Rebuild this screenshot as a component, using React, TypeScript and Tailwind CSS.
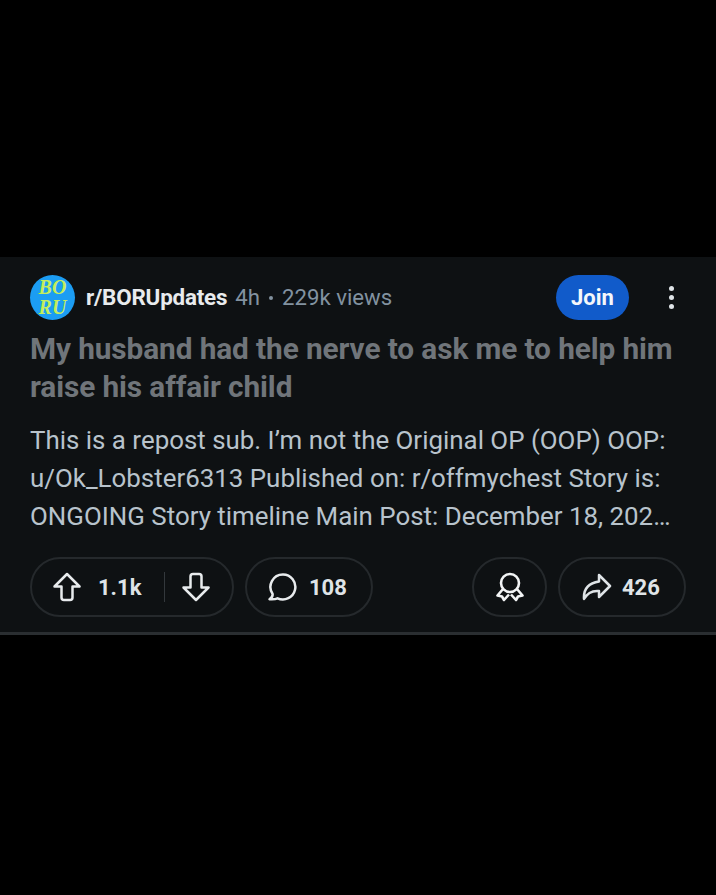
function UpvoteIcon() {
  return (
    <svg viewBox="0 0 28 30" className="h-[30px] w-[28px]" fill="none" stroke="#e8ebed" strokeWidth="2.5" strokeLinejoin="round" aria-hidden="true">
      <path d="M14 2 L26.5 14.5 L19.5 14.5 L19.5 25.5 Q19.5 28 17 28 L11 28 Q8.5 28 8.5 25.5 L8.5 14.5 L1.5 14.5 Z" />
    </svg>
  );
}

function DownvoteIcon() {
  return (
    <svg viewBox="0 0 28 30" className="h-[30px] w-[28px]" fill="none" stroke="#e8ebed" strokeWidth="2.5" strokeLinejoin="round" aria-hidden="true">
      <path d="M14 28 L26.5 15.5 L19.5 15.5 L19.5 4.5 Q19.5 2 17 2 L11 2 Q8.5 2 8.5 4.5 L8.5 15.5 L1.5 15.5 Z" />
    </svg>
  );
}

function CommentIcon() {
  return (
    <svg viewBox="0 0 30 28" className="h-[28px] w-[30px]" fill="none" stroke="#e8ebed" strokeWidth="2.5" strokeLinejoin="round" aria-hidden="true">
      <path d="M16 1.5 A12.5 12.5 0 1 1 10.5 25.3 Q8 26.6 2.5 26.2 Q6 24 5.6 21 A12.5 12.5 0 0 1 16 1.5 Z" />
    </svg>
  );
}

function AwardIcon() {
  return (
    <svg viewBox="0 0 28 30" className="h-[30px] w-[28px]" fill="none" stroke="#f2f4f5" strokeWidth="2.6" strokeLinejoin="round" aria-hidden="true">
      <circle cx="14" cy="11" r="9" />
      <path d="M7 17 L1.5 23.5 L6 24.5 L8 28 L13 22.5" />
      <path d="M21 17 L26.5 23.5 L22 24.5 L20 28 L15 22.5" />
    </svg>
  );
}

function ShareIcon() {
  return (
    <svg viewBox="0 0 30 28" className="h-[28px] w-[30px]" fill="none" stroke="#dfe4e7" strokeWidth="2.5" strokeLinejoin="round" aria-hidden="true">
      <path d="M17 2 L28 13 L17 24 L17 18 Q7 17 2 26 Q1 11 17 8.5 Z" />
    </svg>
  );
}

export default function App() {
  return (
    <div className="flex h-[895px] w-[716px] flex-col overflow-hidden bg-black pt-[257px] font-['Roboto',sans-serif]">
      <article className="h-[378px] border-b-[3px] border-[#2a2e31] bg-[#0e1113] pl-[30px] pr-[30px] pt-[17px]">
        <header className="flex h-[46px] items-center">
          <div className="flex size-[45px] shrink-0 flex-col items-center justify-center rounded-full bg-[#1c9df3] font-['Liberation_Serif',serif] text-[20px] font-bold italic leading-[20px] text-[#c4ee5c]">
            <span>BO</span>
            <span>RU</span>
          </div>
          <span className="ml-[11px] mt-[2px] text-[22.4px] font-bold tracking-[-0.2px] text-[#e8ebed]">r/BORUpdates</span>
          <span className="ml-[8px] mt-[2px] text-[22.2px] text-[#8292a0]">4h</span>
          <span className="mx-[9px] mt-[1px] size-[4px] rounded-full bg-[#8292a0]" />
          <span className="mt-[2px] text-[22.2px] text-[#8292a0]">229k views</span>
          <button className="ml-auto h-[45px] w-[73px] rounded-full bg-[#115bca] text-[22px] font-bold text-[#f4f7fb]">Join</button>
          <div className="ml-[40px] mr-[12px] flex flex-col gap-[4px]">
            <span className="size-[5px] rounded-full bg-[#dfe4e7]" />
            <span className="size-[5px] rounded-full bg-[#dfe4e7]" />
            <span className="size-[5px] rounded-full bg-[#dfe4e7]" />
          </div>
        </header>
        <h1 className="mt-[10px] text-[29.8px] font-bold leading-[38px] tracking-[-0.1px] text-[#70757a]">
          My husband had the nerve to ask me to help him raise his affair child
        </h1>
        <p className="mt-[15px] text-[25.9px] leading-[38px] text-[#b8c3cc]">
          This is a repost sub. I’m not the Original OP (OOP) OOP: u/Ok_Lobster6313 Published on: r/offmychest Story is: ONGOING Story timeline Main Post: December 18, 202…
        </p>
        <footer className="mt-[22px] flex h-[60px] items-stretch">
          <div className="flex w-[204px] items-center rounded-full border-2 border-[#25292c] pl-[21px]">
            <UpvoteIcon />
            <span className="ml-[17px] text-[22px] font-bold text-[#dfe4e7]">1.1k</span>
            <span className="ml-[23px] h-[30px] w-[1px] bg-[#33383c]" />
            <span className="ml-[17px]">
              <DownvoteIcon />
            </span>
          </div>
          <div className="ml-[11px] flex w-[128px] items-center rounded-full border-2 border-[#25292c] pl-[20px]">
            <CommentIcon />
            <span className="ml-[12px] text-[22px] font-bold text-[#dfe4e7]">108</span>
          </div>
          <div className="ml-auto flex w-[75px] items-center justify-center rounded-full border-2 border-[#25292c]">
            <AwardIcon />
          </div>
          <div className="ml-[11px] flex w-[128px] items-center rounded-full border-2 border-[#25292c] pl-[22px]">
            <ShareIcon />
            <span className="ml-[10px] text-[22px] font-bold text-[#dfe4e7]">426</span>
          </div>
        </footer>
      </article>
    </div>
  );
}
